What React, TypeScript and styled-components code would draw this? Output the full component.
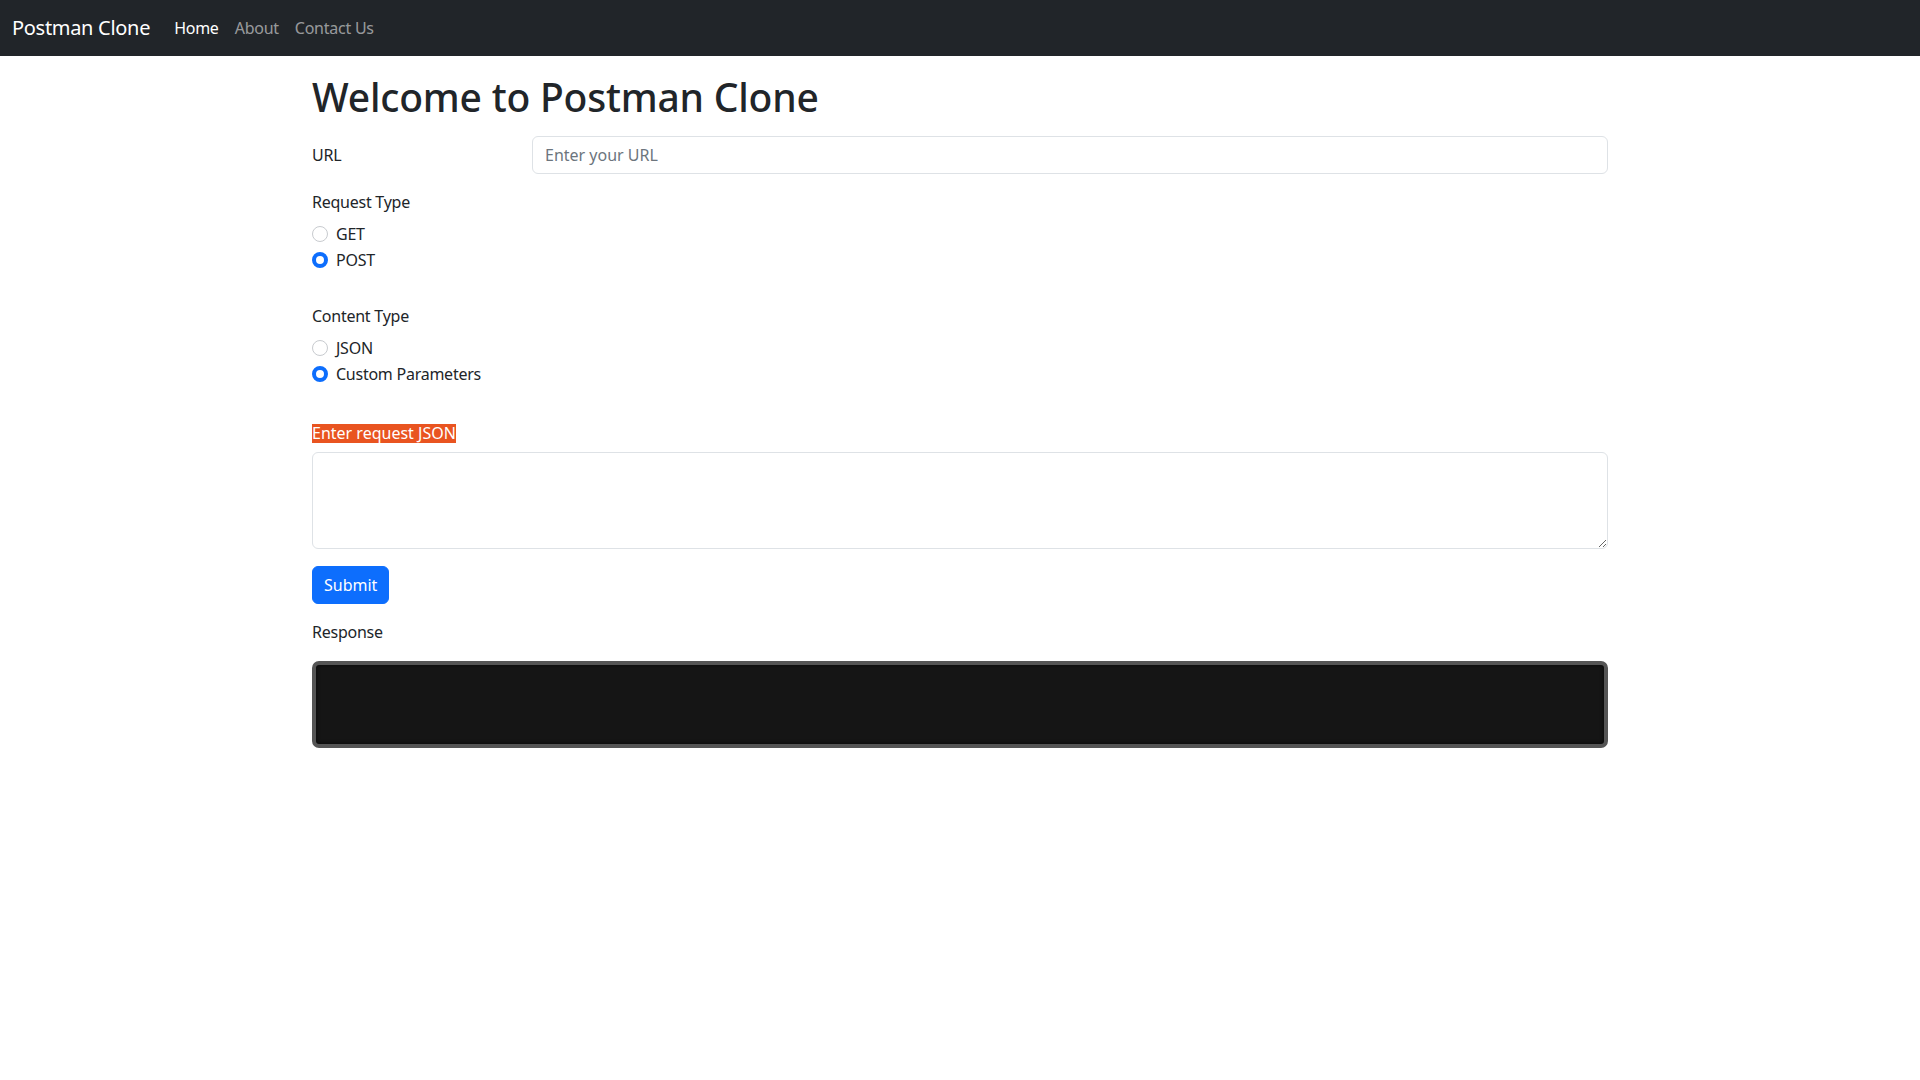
import React from "react";
import styled, { createGlobalStyle } from "styled-components";

const Global = createGlobalStyle`
  *, *::before, *::after { box-sizing: border-box; }
  body {
    margin: 0;
    font-family: "Noto Sans", "Open Sans", sans-serif;
    font-size: 16px;
    line-height: 1.5;
    letter-spacing: -0.25px;
    color: #212529;
    background: #fff;
  }
`;

const NavBar = styled.nav`
  height: 56px;
  background: #212529;
  display: flex;
  align-items: center;
  padding: 0 12px;
`;

const Brand = styled.a`
  font-size: 20px;
  color: #fff;
  margin-right: 16px;
  text-decoration: none;
  line-height: 30px;
  letter-spacing: -0.3px;
`;

const NavLinks = styled.ul`
  display: flex;
  list-style: none;
  margin: 0;
  padding: 0;
`;

const NavLink = styled.a<{ $active?: boolean }>`
  display: block;
  padding: 8px;
  font-size: 16px;
  text-decoration: none;
  color: ${(p) => (p.$active ? "#fff" : "rgba(255,255,255,0.55)")};
`;

const Container = styled.main`
  max-width: 1320px;
  margin: 24px auto 0;
  padding: 0 12px;
`;

const Title = styled.h1`
  font-size: 39px;
  font-weight: 500;
  line-height: 48px;
  letter-spacing: -0.2px;
  margin: -7px 0 15px;
`;

const Row = styled.div`
  display: grid;
  grid-template-columns: 196px 1fr;
  column-gap: 24px;
  margin-bottom: 16px;
`;

const RowLabel = styled.label`
  padding: 7px 0;
  line-height: 24px;
`;

const TextInput = styled.input`
  display: block;
  width: 100%;
  height: 38px;
  padding: 6px 12px;
  font: inherit;
  color: #212529;
  border: 1px solid #dee2e6;
  border-radius: 6px;
  outline: none;
  &::placeholder { color: #6c757d; }
`;

const Group = styled.div<{ $gap: number }>`
  margin-bottom: ${(p) => p.$gap}px;
`;

const FieldLabel = styled.div`
  margin-bottom: 8px;
  line-height: 24px;
`;

const Highlight = styled.span`
  display: inline-block;
  background: #e95420;
  color: #fff;
  line-height: 19px;
  letter-spacing: 0;
  vertical-align: middle;
`;

const Check = styled.label`
  display: flex;
  align-items: center;
  min-height: 24px;
  margin-bottom: 2px;
  gap: 8px;
`;

const Radio = styled.span<{ $checked?: boolean }>`
  width: 16px;
  height: 16px;
  border-radius: 50%;
  flex: none;
  border: ${(p) => (p.$checked ? "4.5px solid #0d6efd" : "1px solid #c8cbcf")};
  background: #fff;
`;

const TextArea = styled.textarea`
  display: block;
  width: 100%;
  height: 97px;
  padding: 6px 12px;
  font: inherit;
  border: 1px solid #dee2e6;
  border-radius: 6px;
  margin-bottom: 17px;
  outline: none;
  resize: vertical;
`;

const Button = styled.button`
  font: inherit;
  color: #fff;
  background: #0d6efd;
  border: 1px solid #0d6efd;
  border-radius: 6px;
  padding: 6px 11px;
  line-height: 24px;
  margin-bottom: 16px;
  cursor: pointer;
`;

const ResponseLabel = styled.div`
  line-height: 24px;
  margin-bottom: 17px;
`;

const ResponseBox = styled.pre`
  margin: 0;
  height: 87px;
  background: #151515;
  border: 4px solid #555;
  border-radius: 7px;
  box-shadow: inset 0 0 4px rgba(0, 0, 0, 0.7);
`;

export default function App() {
  return (
    <>
      <Global />
      <NavBar>
        <Brand href="#">Postman Clone</Brand>
        <NavLinks>
          <li><NavLink $active href="#">Home</NavLink></li>
          <li><NavLink href="#">About</NavLink></li>
          <li><NavLink href="#">Contact Us</NavLink></li>
        </NavLinks>
      </NavBar>
      <Container>
        <Title>Welcome to Postman Clone</Title>
        <Row>
          <RowLabel>URL</RowLabel>
          <TextInput placeholder="Enter your URL" />
        </Row>
        <Group $gap={32}>
          <FieldLabel>Request Type</FieldLabel>
          <Check><Radio />GET</Check>
          <Check><Radio $checked />POST</Check>
        </Group>
        <Group $gap={34}>
          <FieldLabel>Content Type</FieldLabel>
          <Check><Radio />JSON</Check>
          <Check><Radio $checked />Custom Parameters</Check>
        </Group>
        <FieldLabel><Highlight>Enter request JSON</Highlight></FieldLabel>
        <TextArea />
        <Button>Submit</Button>
        <ResponseLabel>Response</ResponseLabel>
        <ResponseBox />
      </Container>
    </>
  );
}
